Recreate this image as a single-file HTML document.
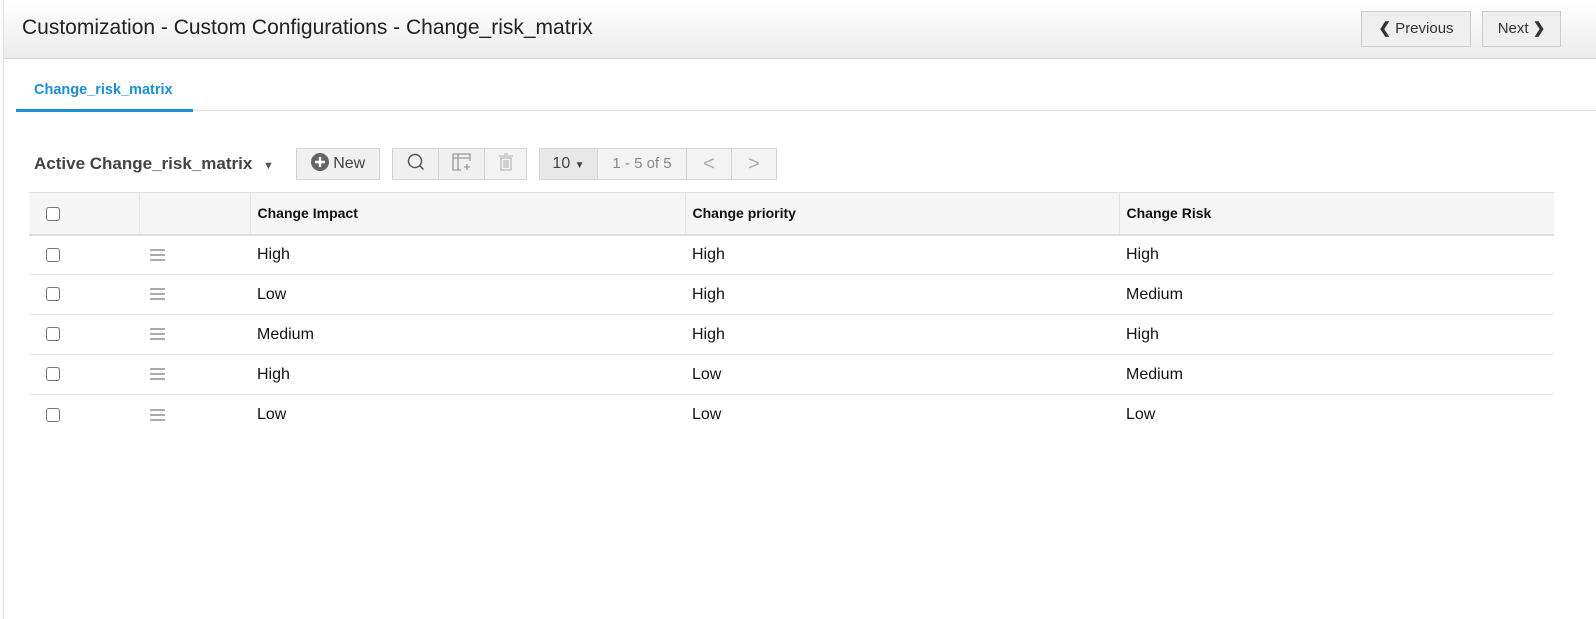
<!DOCTYPE html>
<html><head><style>
*{box-sizing:border-box;margin:0;padding:0}
body{width:1596px;height:619px;background:#fff;font-family:"Liberation Sans",Arial,sans-serif;position:relative;overflow:hidden;color:#111}
.lb{position:absolute;left:0;top:0;width:4px;height:619px;border-right:1px solid #e2e2e2;background:#fafafa}
.hdr{position:absolute;left:4px;top:0;right:0;height:59px;background:linear-gradient(#fff,#ececec);border-bottom:1px solid #cfcfcf}
.title{position:absolute;left:22px;top:16px;font-size:21px;color:#222}
.btn{position:absolute;top:11px;height:36px;border:1px solid #ccc;background:#efefef;font-size:15px;color:#333;line-height:34px;text-align:center}
.tab{position:absolute;left:34px;top:82px;font-size:14.5px;font-weight:bold;color:#1a8fd8}
.tabl{position:absolute;left:16px;top:109px;width:177px;height:3px;background:#1a8fd8}
.tabb{position:absolute;left:16px;right:0;top:110px;height:1px;background:#ddd}
.act{position:absolute;left:34px;top:154px;font-size:17px;font-weight:bold;color:#444}
.tb{position:absolute;top:148px;height:32px;border:1px solid #d4d4d4;background:#f0f0f0;font-size:16px;color:#444;line-height:30px;text-align:center}
table{position:absolute;left:29px;top:192px;width:1525px;border-collapse:collapse;font-size:16px}
th{background:#f5f5f5;height:42px;text-align:left;font-size:14px;border-top:1px solid #e0e0e0;border-bottom:2px solid #ddd;border-right:1px solid #e4e4e4;padding-left:7px}
td{height:40px;border-bottom:1px solid #eaeaea;padding-left:7px}
.cb{display:inline-block;width:14px;height:14px;border:1px solid #777;border-radius:3px;background:#fff;margin-left:10px;vertical-align:middle}
.hm{display:inline-block;width:15px;margin-left:4px;vertical-align:middle}
.hm i{display:block;height:2px;background:#aaa;margin:3px 0}
</style></head><body>
<div class="lb"></div>
<div class="hdr"></div>
<div class="title">Customization - Custom Configurations - Change_risk_matrix</div>
<div class="btn" style="left:1361px;width:110px"><b>&#10094;</b> Previous</div>
<div class="btn" style="left:1482px;width:79px">Next <b>&#10095;</b></div>
<div class="tab">Change_risk_matrix</div>
<div class="tabb"></div><div class="tabl"></div>
<div class="act">Active Change_risk_matrix <span style="font-size:11px;color:#555;margin-left:6px">&#9660;</span></div>
<div class="tb" style="left:296px;width:84px"><svg width="18" height="18" viewBox="0 0 18 18" style="vertical-align:-3px"><circle cx="9" cy="9" r="9" fill="#666"/><path d="M9 4v10M4 9h10" stroke="#fff" stroke-width="2.4"/></svg> New</div>
<div class="tb" style="left:392px;width:47px"><svg width="20" height="20" viewBox="0 0 20 20" style="vertical-align:-4px"><circle cx="9" cy="9" r="6.5" fill="none" stroke="#555" stroke-width="1.5"/><path d="M13.5 13.5l4 4" stroke="#555" stroke-width="1.5"/></svg></div>
<div class="tb" style="left:438px;width:47px"><svg width="22" height="20" viewBox="0 0 22 20" style="vertical-align:-4px"><path d="M2 2h17v7M2 2v16h8M2 6h17M7 2v16" fill="none" stroke="#999" stroke-width="1.3"/><path d="M16 12v6M13 15h6" stroke="#999" stroke-width="1.3"/></svg></div>
<div class="tb" style="left:484px;width:43px;background:#f3f3f3"><svg width="16" height="18" viewBox="0 0 16 18" style="vertical-align:-3px"><path d="M1 3h14M6 1h4M3 5h10v12H3zM6 7v8M8 7v8M10 7v8" fill="none" stroke="#bbb" stroke-width="1.2"/></svg></div>
<div class="tb" style="left:539px;width:59px;background:#e8e8e8">10 <span style="font-size:10px">&#9660;</span></div>
<div class="tb" style="left:597px;width:90px;background:#f3f3f3;color:#888;font-size:15px">1 - 5 of 5</div>
<div class="tb" style="left:686px;width:46px;background:#f3f3f3;color:#aaa;font-size:20px">&lt;</div>
<div class="tb" style="left:731px;width:46px;background:#f3f3f3;color:#aaa;font-size:20px">&gt;</div>
<table>
<tr><th style="width:110px"><span class="cb" style="margin-left:10px"></span></th><th style="width:111px"></th><th style="width:435px">Change Impact</th><th style="width:434px">Change priority</th><th style="border-right:none">Change Risk</th></tr>
<tr><td><span class="cb"></span></td><td><span class="hm"><i></i><i></i><i></i></span></td><td>High</td><td>High</td><td>High</td></tr>
<tr><td><span class="cb"></span></td><td><span class="hm"><i></i><i></i><i></i></span></td><td>Low</td><td>High</td><td>Medium</td></tr>
<tr><td><span class="cb"></span></td><td><span class="hm"><i></i><i></i><i></i></span></td><td>Medium</td><td>High</td><td>High</td></tr>
<tr><td><span class="cb"></span></td><td><span class="hm"><i></i><i></i><i></i></span></td><td>High</td><td>Low</td><td>Medium</td></tr>
<tr><td style="border:none"><span class="cb"></span></td><td style="border:none"><span class="hm"><i></i><i></i><i></i></span></td><td style="border:none">Low</td><td style="border:none">Low</td><td style="border:none">Low</td></tr>
</table>
</body></html>
